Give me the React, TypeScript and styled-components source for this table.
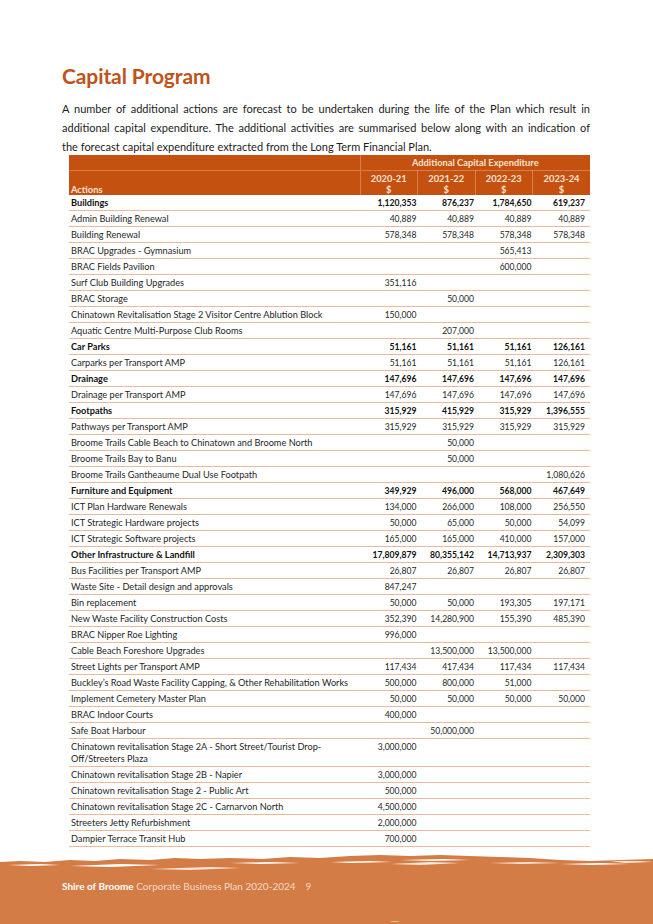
import React from "react";
import styled, { createGlobalStyle } from "styled-components";

const Global = createGlobalStyle`
  html, body { margin: 0; padding: 0; background: #ffffff; }
  body { font-family: Lato, "Open Sans", "Liberation Sans", sans-serif; color: #1a1a1a; }
`;

const Page = styled.div`
  width: 653px;
  height: 924px;
  display: flex;
  flex-direction: column;
  overflow: hidden;
  background: #fff;
`;

const Content = styled.main`
  padding: 62px 63px 0 62px;
  display: flex;
  flex-direction: column;
`;

const Title = styled.h1`
  margin: 0;
  font-size: 21px;
  line-height: 28px;
  font-weight: 700;
  color: #c0521b;
  letter-spacing: -0.1px;
`;

const Intro = styled.p`
  margin: 9px 0 0 0;
  font-size: 11px;
  line-height: 19px;
  color: #1c1c1c;
`;

const Line = styled.span<{ $justify?: boolean }>`
  display: block;
  text-align: ${(p) => (p.$justify ? "justify" : "left")};
  text-align-last: ${(p) => (p.$justify ? "justify" : "left")};
  white-space: nowrap;
`;

const Table = styled.table`
  margin: -1px 0 0 7px;
  width: 521px;
  border-collapse: collapse;
  table-layout: fixed;
  line-height: 12px;
`;

const HeadCell = styled.th<{ $align?: string; $tall?: boolean }>`
  background: #c4510f;
  color: #fbe3d3;
  font-weight: 700;
  font-size: 9.3px;
  line-height: 11px;
  text-align: ${(p) => p.$align || "center"};
  vertical-align: bottom;
  padding: ${(p) => (p.$tall ? "1px 2px 0 2px" : "2px 2px 2px 2px")};
  height: ${(p) => (p.$tall ? "23px" : "11px")};
  border-left: 1px solid rgba(255, 210, 185, 0.35);
  border-bottom: 1px solid rgba(255, 210, 185, 0.35);
  &:first-child { border-left: none; }
`;

const HeadBottom = styled(HeadCell)`
  border-bottom: none;
`;

const Row = styled.tr<{ $bold?: boolean }>`
  font-weight: ${(p) => (p.$bold ? 700 : 400)};
  color: ${(p) => (p.$bold ? "#111" : "#262626")};
`;

const Cell = styled.td<{ $num?: boolean; $last?: boolean }>`
  padding: 2px ${(p) => (p.$last ? "5px" : p.$num ? "1px" : "2px")} 1px 2px;
  font-size: ${(p) => (p.$num ? "8.6px" : "9.2px")};
  text-align: ${(p) => (p.$num ? "right" : "left")};
  vertical-align: baseline;
  border-bottom: 1px solid #eab99d;
  white-space: ${(p) => (p.$num ? "nowrap" : "normal")};
`;

const Footer = styled.footer`
  margin-top: auto;
  position: relative;
  display: flex;
  flex-direction: column;
`;

const Edge = styled.svg`
  display: block;
  width: 653px;
  height: 22px;
`;

const Band = styled.div`
  background: #d37c46;
  height: 52px;
  padding: 8px 0 0 62px;
  box-sizing: border-box;
  font-size: 10px;
  line-height: 12px;
  color: #f8d9c5;
  display: flex;
  align-items: flex-start;
  gap: 10px;
`;

const Brand = styled.span`
  font-weight: 700;
  color: #ffffff;
`;

const Mark = styled.span`
  position: absolute;
  left: 391px;
  bottom: 2px;
  width: 8px;
  height: 1px;
  background: #f2b793;
`;

type R = [string, string, string, string, string, boolean?];

const rows: R[] = [
  ["Buildings", "1,120,353", "876,237", "1,784,650", "619,237", true],
  ["Admin Building Renewal", "40,889", "40,889", "40,889", "40,889"],
  ["Building Renewal", "578,348", "578,348", "578,348", "578,348"],
  ["BRAC Upgrades - Gymnasium", "", "", "565,413", ""],
  ["BRAC Fields Pavilion", "", "", "600,000", ""],
  ["Surf Club Building Upgrades", "351,116", "", "", ""],
  ["BRAC Storage", "", "50,000", "", ""],
  ["Chinatown Revitalisation Stage 2 Visitor Centre Ablution Block", "150,000", "", "", ""],
  ["Aquatic Centre Multi-Purpose Club Rooms", "", "207,000", "", ""],
  ["Car Parks", "51,161", "51,161", "51,161", "126,161", true],
  ["Carparks per Transport AMP", "51,161", "51,161", "51,161", "126,161"],
  ["Drainage", "147,696", "147,696", "147,696", "147,696", true],
  ["Drainage per Transport AMP", "147,696", "147,696", "147,696", "147,696"],
  ["Footpaths", "315,929", "415,929", "315,929", "1,396,555", true],
  ["Pathways per Transport AMP", "315,929", "315,929", "315,929", "315,929"],
  ["Broome Trails Cable Beach to Chinatown and Broome North", "", "50,000", "", ""],
  ["Broome Trails Bay to Banu", "", "50,000", "", ""],
  ["Broome Trails Gantheaume Dual Use Footpath", "", "", "", "1,080,626"],
  ["Furniture and Equipment", "349,929", "496,000", "568,000", "467,649", true],
  ["ICT Plan Hardware Renewals", "134,000", "266,000", "108,000", "256,550"],
  ["ICT Strategic Hardware projects", "50,000", "65,000", "50,000", "54,099"],
  ["ICT Strategic Software projects", "165,000", "165,000", "410,000", "157,000"],
  ["Other Infrastructure & Landfill", "17,809,879", "80,355,142", "14,713,937", "2,309,303", true],
  ["Bus Facilities per Transport AMP", "26,807", "26,807", "26,807", "26,807"],
  ["Waste Site - Detail design and approvals", "847,247", "", "", ""],
  ["Bin replacement", "50,000", "50,000", "193,305", "197,171"],
  ["New Waste Facility Construction Costs", "352,390", "14,280,900", "155,390", "485,390"],
  ["BRAC Nipper Roe Lighting", "996,000", "", "", ""],
  ["Cable Beach Foreshore Upgrades", "", "13,500,000", "13,500,000", ""],
  ["Street Lights per Transport AMP", "117,434", "417,434", "117,434", "117,434"],
  ["Buckley\u2019s Road Waste Facility Capping, & Other Rehabilitation Works", "500,000", "800,000", "51,000", ""],
  ["Implement Cemetery Master Plan", "50,000", "50,000", "50,000", "50,000"],
  ["BRAC Indoor Courts", "400,000", "", "", ""],
  ["Safe Boat Harbour", "", "50,000,000", "", ""],
  ["Chinatown revitalisation Stage 2A - Short Street/Tourist Drop-Off/Streeters Plaza", "3,000,000", "", "", ""],
  ["Chinatown revitalisation Stage 2B - Napier", "3,000,000", "", "", ""],
  ["Chinatown revitalisation Stage 2 - Public Art", "500,000", "", "", ""],
  ["Chinatown revitalisation Stage 2C - Carnarvon North", "4,500,000", "", "", ""],
  ["Streeters Jetty Refurbishment", "2,000,000", "", "", ""],
  ["Dampier Terrace Transit Hub", "700,000", "", "", ""],
];

const years = ["2020-21", "2021-22", "2022-23", "2023-24"];

function BrushEdge() {
  return (
    <Edge viewBox="0 0 653 22" preserveAspectRatio="none">
      <path
        fill="#d37c46"
        d="M0 12 L20 11 L45 12 L70 10 L95 11 L120 9 L150 10 L175 8 L200 9 L230 8 L262 9 L290 7 L320 8 L350 6 L380 5 L410 6 L440 5 L470 6 L500 7 L530 8 L560 10 L590 11 L620 10 L653 9 L653 22 L0 22 Z"
      />
      <path fill="#ffffff" d="M8 15 L40 14 L60 15 L30 16 Z" />
      <path fill="#ffffff" d="M70 16 L120 14 L160 15 L110 17 Z" />
      <path fill="#fbe6d8" d="M150 19 L210 17 L240 18 L190 20 Z" />
      <path fill="#ffffff" d="M230 13 L270 12 L300 13 L260 14 Z" />
      <path fill="#ffffff" d="M330 12 L370 11 L392 12 L350 13 Z" />
      <path fill="#fbe6d8" d="M390 14 L430 12 L460 13 L420 15 Z" />
      <path fill="#ffffff" d="M400 10 L445 9 L470 10 L430 11 Z" />
      <path fill="#fbe6d8" d="M490 13 L530 12 L560 13 L520 14 Z" />
      <path fill="#ffffff" d="M560 14 L600 13 L630 14 L590 15 Z" />
      <path fill="#fbe6d8" d="M610 11 L640 11 L653 12 L625 13 Z" />
    </Edge>
  );
}

export default function App() {
  return (
    <Page>
      <Global />
      <Content>
        <Title>Capital Program</Title>
        <Intro>
          <Line $justify>
            A number of additional actions are forecast to be undertaken during the life of the Plan which result in
          </Line>
          <Line $justify>
            additional capital expenditure. The additional activities are summarised below along with an indication of
          </Line>
          <Line>the forecast capital expenditure extracted from the Long Term Financial Plan.</Line>
        </Intro>
        <Table>
          <colgroup>
            <col style={{ width: "291px" }} />
            <col style={{ width: "57.5px" }} />
            <col style={{ width: "57.5px" }} />
            <col style={{ width: "57.5px" }} />
            <col style={{ width: "57.5px" }} />
          </colgroup>
          <thead>
            <tr>
              <HeadCell $align="left"></HeadCell>
              <HeadCell colSpan={4}>Additional Capital Expenditure</HeadCell>
            </tr>
            <tr>
              <HeadBottom $align="left" $tall>Actions</HeadBottom>
              {years.map((y) => (
                <HeadBottom key={y} $tall>
                  {y}
                  <br />$
                </HeadBottom>
              ))}
            </tr>
          </thead>
          <tbody>
            {rows.map((r, i) => (
              <Row key={i} $bold={r[5]}>
                <Cell>{r[0]}</Cell>
                <Cell $num>{r[1]}</Cell>
                <Cell $num>{r[2]}</Cell>
                <Cell $num>{r[3]}</Cell>
                <Cell $num $last>{r[4]}</Cell>
              </Row>
            ))}
          </tbody>
        </Table>
      </Content>
      <Footer>
        <BrushEdge />
        <Band>
          <span>
            <Brand>Shire of Broome</Brand> Corporate Business Plan 2020-2024
          </span>
          <span>9</span>
        </Band>
        <Mark />
      </Footer>
    </Page>
  );
}
